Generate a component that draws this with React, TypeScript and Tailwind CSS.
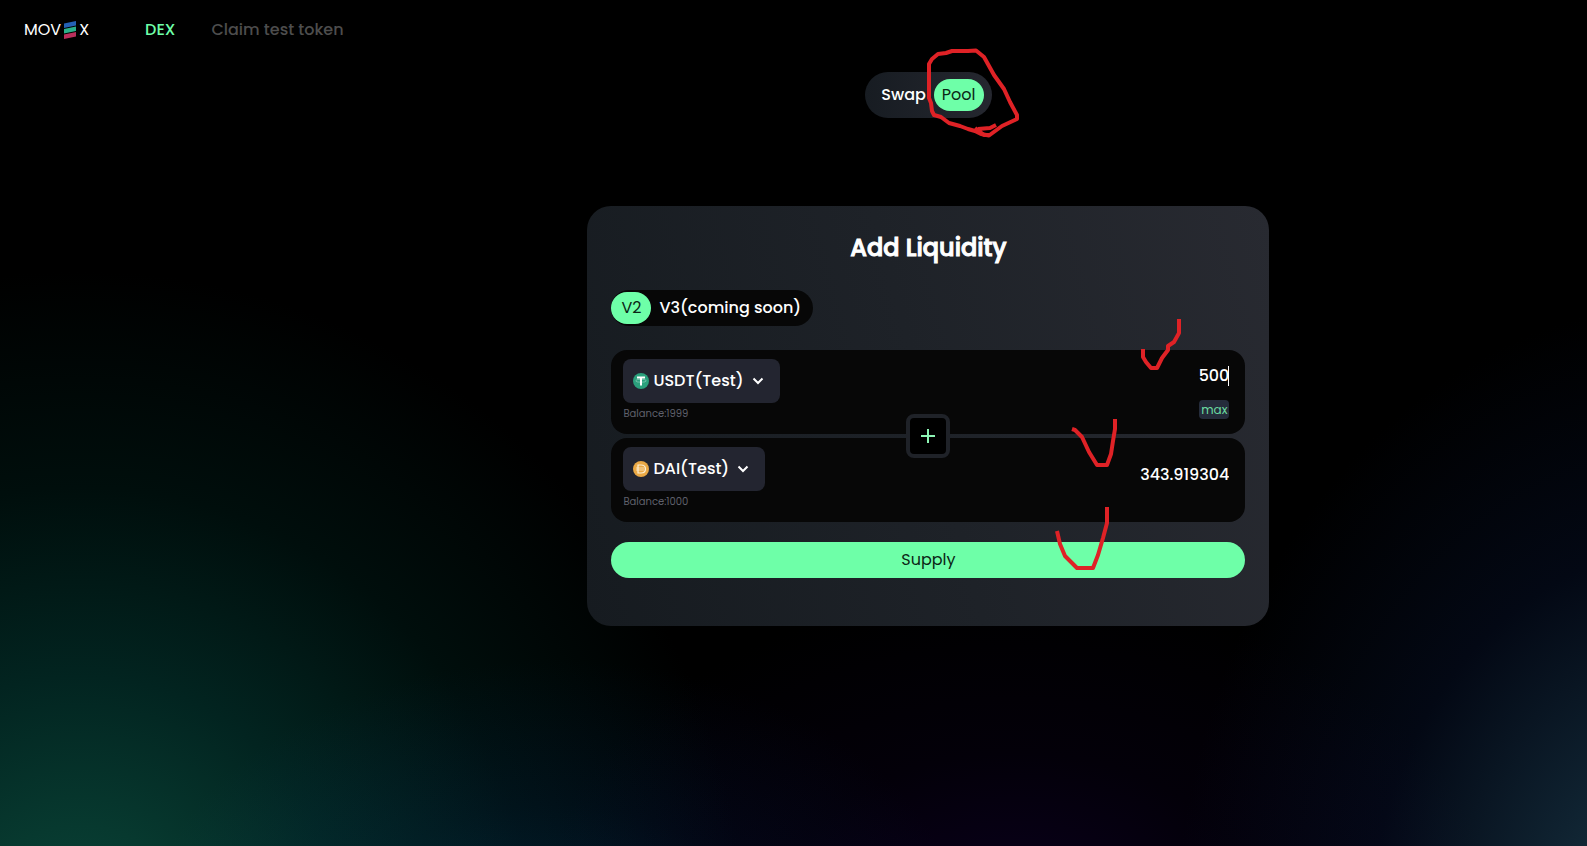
import { useState } from "react";
import type { ReactNode } from "react";

function Chevron() {
  return (
    <svg viewBox="0 0 12 8" className="h-2 w-3" fill="none" stroke="currentColor" strokeWidth="2" aria-hidden="true">
      <path d="M1.5 1.5 6 6l4.5-4.5" />
    </svg>
  );
}

function UsdtIcon() {
  return (
    <svg viewBox="0 0 32 32" className="size-4 shrink-0" aria-hidden="true">
      <circle cx="16" cy="16" r="16" fill="#2ba07c" />
      <ellipse cx="16" cy="15.500" rx="10.500" ry="3" fill="none" stroke="#fff" strokeWidth="1.200" opacity="0.55" />
      <path fill="#fff" d="M8 7h16v4h-6v14h-4V11H8z" />
    </svg>
  );
}

function DaiIcon() {
  return (
    <svg viewBox="0 0 32 32" className="size-4 shrink-0" aria-hidden="true">
      <circle cx="16" cy="16" r="16" fill="#eba945" />
      <path
        fill="none"
        stroke="#fdf0d5"
        strokeWidth="2.400"
        d="M10 8h6c5.500 0 9 3.500 9 8s-3.500 8-9 8h-6z"
      />
      <path fill="none" stroke="#fdf0d5" strokeWidth="1.800" opacity="0.8" d="M6 14H23M6 18H23" />
    </svg>
  );
}

function Logo() {
  return (
    <a href="#" aria-label="MOVEX" className="flex items-center text-white">
      <span>MOV</span>
      <svg viewBox="0 0 12 18" className="mx-[3px] h-[18px] w-3" aria-hidden="true">
        <path d="M0 2.500 12 0v4.500L0 7z" fill="#2460b4" />
        <path d="M0 8 12 5.500V10L0 12.500z" fill="#2bb08a" />
        <path d="M0 13.500 12 11v4.500L0 18z" fill="#b92f5c" />
      </svg>
      <span>X</span>
    </a>
  );
}

type TokenRowProps = {
  symbol: string;
  icon: ReactNode;
  balance: string;
  value: string;
  onChange: (value: string) => void;
  onMax?: () => void;
  caret?: boolean;
};

function TokenRow({ symbol, icon, balance, value, onChange, onMax, caret }: TokenRowProps) {
  return (
    <div className="flex h-[84px] justify-between rounded-2xl bg-[#070707] pr-4 pl-3">
      <div className="pt-[9px]">
        <button type="button" className="flex h-11 items-center gap-1 rounded-lg bg-[#232530] pr-4 pl-2.5 font-medium">
          {icon}
          <span className="mr-1">{symbol}</span>
          <Chevron />
        </button>
        <p className="mt-[5px] text-[10px] leading-3 text-[#5f606b]">Balance:{balance}</p>
      </div>
      <div className={onMax ? "flex flex-col items-end justify-center gap-3 pb-px" : "flex flex-col items-end justify-center pb-2.5"}>
        <div className="flex items-center">
          <input
            aria-label={`${symbol} amount`}
            value={value}
            onChange={(event) => onChange(event.target.value)}
            className="h-6 w-40 bg-transparent text-right font-medium outline-none"
          />
          {caret && <span className="-ml-px h-5 w-px bg-white" />}
        </div>
        {onMax && (
          <button
            type="button"
            onClick={onMax}
            className="flex h-[19px] items-center rounded bg-[#252c3b] px-0.5 text-xs text-[#6bdba0]"
          >
            max
          </button>
        )}
      </div>
    </div>
  );
}

export default function App() {
  const [first, setFirst] = useState("500");
  const [second, setSecond] = useState("343.919304");

  return (
    <div className="min-h-screen bg-black bg-[radial-gradient(ellipse_42%_80%_at_5%_112%,#0c463c_0%,#07392f_18%,#022420_40%,#000e0c_68%,#000_100%),radial-gradient(ellipse_32%_76%_at_106%_112%,#1e3c4a_0%,#0f2230_30%,#030814_62%,#000_100%),radial-gradient(ellipse_30%_38%_at_64%_108%,#0a001e_0%,#030009_50%,#000_100%),radial-gradient(ellipse_26%_34%_at_35%_112%,#031428_0%,#010610_50%,#000_100%)] bg-blend-screen font-['Poppins','Inter',sans-serif] text-base text-white">
      <header className="flex h-[60px] items-center px-6">
        <Logo />
        <nav className="ml-14 flex gap-9 font-medium">
          <a href="#" className="text-[#6effa8]">
            DEX
          </a>
          <a href="#" className="text-[#4d4d4d]">
            Claim test token
          </a>
        </nav>
      </header>

      <main className="flex flex-col items-center pt-3 pl-[17%]">
        <div className="relative flex h-[46px] items-center gap-2 rounded-full bg-linear-to-r from-[#171c22] to-[#25272f] pr-2 pl-4">
          <button type="button" className="font-medium">
            Swap
          </button>
          <button type="button" className="h-8 rounded-full bg-[#6effa8] px-2 text-[#0b2616]">
            Pool
          </button>
          <svg
            viewBox="0 0 180 110"
            className="pointer-events-none absolute -top-8 -right-[38px] h-[110px] w-[180px]"
            fill="none"
            stroke="#df2226"
            strokeWidth="4"
            strokeLinejoin="round"
            aria-hidden="true"
          >
            <path d="M118 11H102L96 13l-8 1-6 5-3 5v34l2 5 1 8 2 4 7 2 8 6 11 3 8 3 7 2 6 3 8 1.500 13-9.500 15-7v-4l-7-13-6-13-10-14-10-18-8-6.500z" />
            <path d="m128 89 12-1 6-3M125 88l9 7h6" />
          </svg>
        </div>

        <section className="relative mt-[88px] mb-10 h-[420px] w-full max-w-[682px] rounded-3xl bg-linear-[75deg] from-[#161b20] via-[#1e2228] to-[#282a31] px-6 pt-6">
          <h1 className="text-center text-2xl leading-9 font-medium [-webkit-text-stroke:1px_white]">Add Liquidity</h1>

          <div className="mt-6 flex">
            <div className="flex h-9 items-center gap-2 rounded-full bg-[#070707] pr-3">
              <button type="button" className="h-8 w-10 rounded-full bg-[#6effa8] text-[#0b2616]">
                V2
              </button>
              <button type="button" className="font-medium">
                V3(coming soon)
              </button>
            </div>
          </div>

          <div className="relative mt-6 flex flex-col gap-1">
            <TokenRow
              symbol="USDT(Test)"
              icon={<UsdtIcon />}
              balance="1999"
              value={first}
              onChange={setFirst}
              onMax={() => setFirst("1999")}
              caret
            />
            <TokenRow symbol="DAI(Test)" icon={<DaiIcon />} balance="1000" value={second} onChange={setSecond} />
            <button
              type="button"
              aria-label="Add"
              className="absolute inset-0 m-auto flex size-11 items-center justify-center rounded-lg border-4 border-[#1f2228] bg-black text-[#8df5b5]"
            >
              <svg viewBox="0 0 14 14" className="size-3.5" fill="none" stroke="currentColor" strokeWidth="2" aria-hidden="true">
                <path d="M7 0v14M0 7h14" />
              </svg>
            </button>
          </div>

          <button type="button" className="mt-5 h-9 w-full rounded-full bg-[#6effa8] text-[#0b2616]">
            Supply
          </button>

          <svg
            viewBox="0 0 350 290"
            className="pointer-events-none absolute top-[95px] -right-[11px] h-[290px] w-[350px]"
            fill="none"
            stroke="#df2226"
            strokeWidth="4"
            strokeLinejoin="round"
            aria-hidden="true"
          >
            <path d="M213 48v8l3 5 5 6h6l5-10 6-8v-4l6-4 5-9V18" />
            <path d="m142 128 3 1 7 7 7 15 8 13h10l4-11 2-13 2-12v-10" />
            <path d="m127 230 3 13 5 12 12 12h16l5-13 5-17 4-15v-16" />
          </svg>
        </section>
      </main>
    </div>
  );
}
